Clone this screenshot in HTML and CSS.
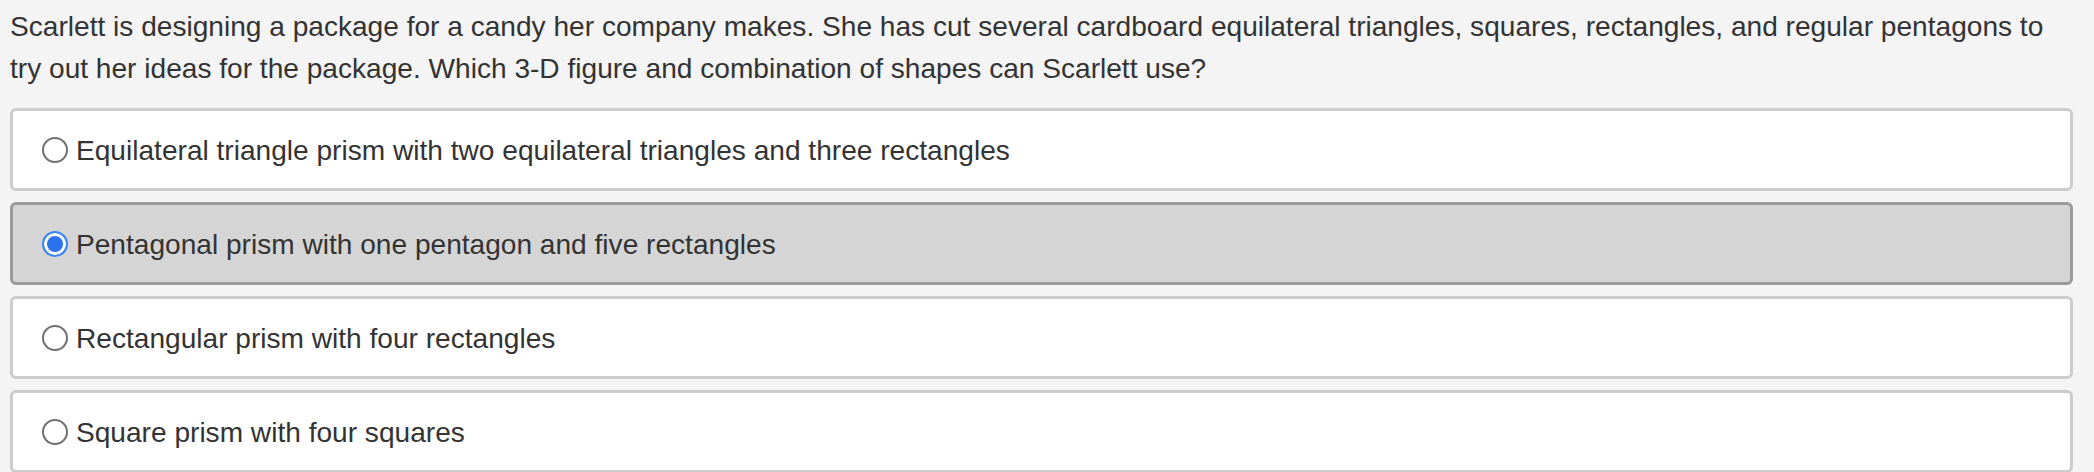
FILE: index.html
```html
<!DOCTYPE html>
<html>
<head>
<meta charset="utf-8">
<link rel="stylesheet" href="styles.css">
</head>
<body>
<div class="page">
  <p class="question">Scarlett is designing a package for a candy her company makes. She has cut several cardboard equilateral triangles, squares, rectangles, and regular pentagons to try out her ideas for the package. Which 3-D figure and combination of shapes can Scarlett use?</p>
  <div class="options">
    <label class="option"><input class="radio" type="radio" name="a"><span class="text">Equilateral triangle prism with two equilateral triangles and three rectangles</span></label>
    <label class="option selected"><input class="radio" type="radio" name="a" checked><span class="text">Pentagonal prism with one pentagon and five rectangles</span></label>
    <label class="option"><input class="radio" type="radio" name="a"><span class="text">Rectangular prism with four rectangles</span></label>
    <label class="option"><input class="radio" type="radio" name="a"><span class="text">Square prism with four squares</span></label>
  </div>
</div>
</body>
</html>
```
FILE: styles.css
```css
html, body {
  margin: 0;
  padding: 0;
  background: #f4f4f4;
}
body {
  font-family: "Liberation Sans", Arial, Helvetica, sans-serif;
  font-size: 28.1px;
  line-height: 42px;
  color: #333333;
}
.page {
  padding: 6px 21px 0 10px;
}
.question {
  margin: 0;
}
.options {
  margin-top: 18px;
  display: flex;
  flex-direction: column;
  gap: 11px;
}
.option {
  display: flex;
  align-items: center;
  height: 83px;
  box-sizing: border-box;
  padding: 0 0 0 29px;
  background: #ffffff;
  border: 3px solid #cccccc;
  border-radius: 6px;
  cursor: pointer;
}
.option.selected {
  background: #d5d5d5;
  border-color: #9a9a9a;
}
.radio {
  appearance: none;
  -webkit-appearance: none;
  margin: 0 8px 0 0;
  width: 26px;
  height: 26px;
  border-radius: 50%;
  border: 2px solid #707070;
  background: #ffffff;
  box-sizing: border-box;
  flex: none;
}
.radio:checked {
  border: 2px solid #3d86f5;
  background: #2a72ee;
  box-shadow: inset 0 0 0 3px #ffffff;
}
.text {
  position: relative;
  top: 1px;
}
```
